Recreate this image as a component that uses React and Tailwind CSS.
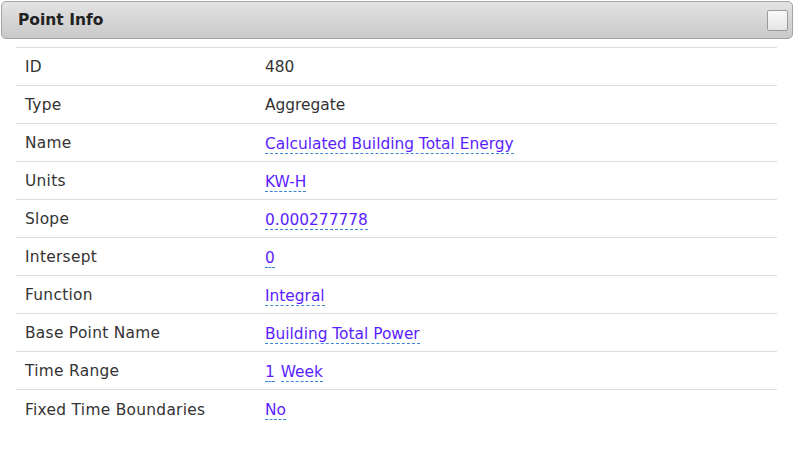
import React from "react";

const rows = [
  { label: "ID", value: "480" },
  { label: "Type", value: "Aggregate" },
  { label: "Name", value: "Calculated Building Total Energy", link: true },
  { label: "Units", value: "KW-H", link: true },
  { label: "Slope", value: "0.000277778", link: true },
  { label: "Intersept", value: "0", link: true },
  { label: "Function", value: "Integral", link: true },
  { label: "Base Point Name", value: "Building Total Power", link: true },
  { label: "Time Range", parts: ["1", "Week"] },
  { label: "Fixed Time Boundaries", value: "No", link: true },
];

const Editable = ({ children }) => (
  <span className="text-[#5a1eff] border-b border-dashed border-[#3b86d1] leading-[18px] inline-block">
    {children}
  </span>
);

const App = () => {
  return (
    <div className="w-[794px] h-[456px] bg-white font-['DejaVu_Sans',sans-serif] text-[#333] pt-px px-px">
      {/* header */}
      <div className="h-[38px] rounded-[5px] border border-[#a3a3a3] bg-gradient-to-b from-[#e3e3e3] to-[#c9c9c9] flex items-center justify-between pl-4 pr-[4px]">
        <h2 className="text-[15.5px] font-bold text-[#222] pt-[2px]">Point Info</h2>
        <div className="w-[21px] h-[21px] border border-[#9a9a9a] rounded-[2px] bg-gradient-to-b from-[#fafafa] to-[#e4e4e4]" />
      </div>

      {/* table */}
      <div className="mt-2 ml-[15px] w-[761px] border-t border-[#ddd] text-[15.4px]">
        {rows.map((r, i) => (
          <div
            key={r.label}
            className={`h-[38px] pt-[3px] flex items-center ${i < rows.length - 1 ? "border-b border-[#ddd]" : ""}`}
          >
            <div className="w-[249px] pl-[9px] tracking-[0.3px]">{r.label}</div>
            <div className="flex gap-[6px]">
              {r.parts ? (
                r.parts.map((p) => <Editable key={p}>{p}</Editable>)
              ) : r.link ? (
                <Editable>{r.value}</Editable>
              ) : (
                <span>{r.value}</span>
              )}
            </div>
          </div>
        ))}
      </div>
    </div>
  );
};

export default App;
